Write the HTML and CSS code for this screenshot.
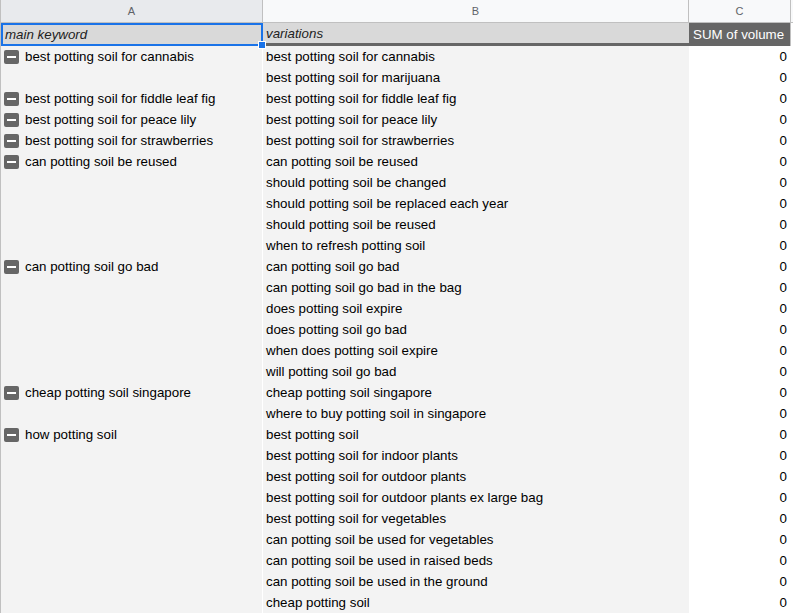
FILE: index.html
```html
<!DOCTYPE html>
<html>
<head>
<meta charset="utf-8">
<link rel="stylesheet" href="styles.css">
</head>
<body>
<div class="sheet">
  <div class="colheads">
    <div class="gut"></div>
    <div class="ch ch-a">A</div>
    <div class="ch ch-b">B</div>
    <div class="ch ch-c">C</div>
    <div class="ch ch-rest"></div>
  </div>
  <div class="row row-head">
    <div class="gut"></div>
    <div class="cell a h1">main keyword<span class="handle"></span></div>
    <div class="cell b h1">variations</div>
    <div class="cell c sum">SUM of volume</div>
    <div class="rest"></div>
  </div>
  <div class="row"><div class="gut"></div><div class="cell a"><span class="minus"></span>best potting soil for cannabis</div><div class="cell b">best potting soil for cannabis</div><div class="cell c num">0</div><div class="rest"></div></div>
  <div class="row"><div class="gut"></div><div class="cell a"></div><div class="cell b">best potting soil for marijuana</div><div class="cell c num">0</div><div class="rest"></div></div>
  <div class="row"><div class="gut"></div><div class="cell a"><span class="minus"></span>best potting soil for fiddle leaf fig</div><div class="cell b">best potting soil for fiddle leaf fig</div><div class="cell c num">0</div><div class="rest"></div></div>
  <div class="row"><div class="gut"></div><div class="cell a"><span class="minus"></span>best potting soil for peace lily</div><div class="cell b">best potting soil for peace lily</div><div class="cell c num">0</div><div class="rest"></div></div>
  <div class="row"><div class="gut"></div><div class="cell a"><span class="minus"></span>best potting soil for strawberries</div><div class="cell b">best potting soil for strawberries</div><div class="cell c num">0</div><div class="rest"></div></div>
  <div class="row"><div class="gut"></div><div class="cell a"><span class="minus"></span>can potting soil be reused</div><div class="cell b">can potting soil be reused</div><div class="cell c num">0</div><div class="rest"></div></div>
  <div class="row"><div class="gut"></div><div class="cell a"></div><div class="cell b">should potting soil be changed</div><div class="cell c num">0</div><div class="rest"></div></div>
  <div class="row"><div class="gut"></div><div class="cell a"></div><div class="cell b">should potting soil be replaced each year</div><div class="cell c num">0</div><div class="rest"></div></div>
  <div class="row"><div class="gut"></div><div class="cell a"></div><div class="cell b">should potting soil be reused</div><div class="cell c num">0</div><div class="rest"></div></div>
  <div class="row"><div class="gut"></div><div class="cell a"></div><div class="cell b">when to refresh potting soil</div><div class="cell c num">0</div><div class="rest"></div></div>
  <div class="row"><div class="gut"></div><div class="cell a"><span class="minus"></span>can potting soil go bad</div><div class="cell b">can potting soil go bad</div><div class="cell c num">0</div><div class="rest"></div></div>
  <div class="row"><div class="gut"></div><div class="cell a"></div><div class="cell b">can potting soil go bad in the bag</div><div class="cell c num">0</div><div class="rest"></div></div>
  <div class="row"><div class="gut"></div><div class="cell a"></div><div class="cell b">does potting soil expire</div><div class="cell c num">0</div><div class="rest"></div></div>
  <div class="row"><div class="gut"></div><div class="cell a"></div><div class="cell b">does potting soil go bad</div><div class="cell c num">0</div><div class="rest"></div></div>
  <div class="row"><div class="gut"></div><div class="cell a"></div><div class="cell b">when does potting soil expire</div><div class="cell c num">0</div><div class="rest"></div></div>
  <div class="row"><div class="gut"></div><div class="cell a"></div><div class="cell b">will potting soil go bad</div><div class="cell c num">0</div><div class="rest"></div></div>
  <div class="row"><div class="gut"></div><div class="cell a"><span class="minus"></span>cheap potting soil singapore</div><div class="cell b">cheap potting soil singapore</div><div class="cell c num">0</div><div class="rest"></div></div>
  <div class="row"><div class="gut"></div><div class="cell a"></div><div class="cell b">where to buy potting soil in singapore</div><div class="cell c num">0</div><div class="rest"></div></div>
  <div class="row"><div class="gut"></div><div class="cell a"><span class="minus"></span>how potting soil</div><div class="cell b">best potting soil</div><div class="cell c num">0</div><div class="rest"></div></div>
  <div class="row"><div class="gut"></div><div class="cell a"></div><div class="cell b">best potting soil for indoor plants</div><div class="cell c num">0</div><div class="rest"></div></div>
  <div class="row"><div class="gut"></div><div class="cell a"></div><div class="cell b">best potting soil for outdoor plants</div><div class="cell c num">0</div><div class="rest"></div></div>
  <div class="row"><div class="gut"></div><div class="cell a"></div><div class="cell b">best potting soil for outdoor plants ex large bag</div><div class="cell c num">0</div><div class="rest"></div></div>
  <div class="row"><div class="gut"></div><div class="cell a"></div><div class="cell b">best potting soil for vegetables</div><div class="cell c num">0</div><div class="rest"></div></div>
  <div class="row"><div class="gut"></div><div class="cell a"></div><div class="cell b">can potting soil be used for vegetables</div><div class="cell c num">0</div><div class="rest"></div></div>
  <div class="row"><div class="gut"></div><div class="cell a"></div><div class="cell b">can potting soil be used in raised beds</div><div class="cell c num">0</div><div class="rest"></div></div>
  <div class="row"><div class="gut"></div><div class="cell a"></div><div class="cell b">can potting soil be used in the ground</div><div class="cell c num">0</div><div class="rest"></div></div>
  <div class="row"><div class="gut"></div><div class="cell a"></div><div class="cell b">cheap potting soil</div><div class="cell c num">0</div><div class="rest"></div></div>
</div>
</body>
</html>
```

FILE: styles.css
```css
html, body {
  margin: 0;
  padding: 0;
  background: #ffffff;
  overflow: hidden;
}

.sheet {
  width: 793px;
  height: 614px;
  overflow: hidden;
  font-family: "Liberation Sans", Arial, sans-serif;
  font-size: 10pt;
  color: #000;
}

.colheads {
  display: flex;
  height: 23px;
  box-sizing: border-box;
  border-bottom: 1px solid #c0c0c0;
  background: #f8f9fa;
}

.ch {
  box-sizing: border-box;
  border-right: 1px solid #c0c0c0;
  display: flex;
  align-items: center;
  justify-content: center;
  font-size: 11px;
  color: #5f6368;
  flex: none;
}

.gut {
  width: 1px;
  flex: none;
  background: #c0c0c0;
}

.ch-a { width: 262px; background: #e8eaed; }
.ch-b { width: 426px; }
.ch-c { width: 102px; }
.ch-rest { flex: 1; border-right: none; }

.row {
  display: flex;
  height: 21px;
}

.row-head {
  height: 23px;
}

.cell {
  box-sizing: border-box;
  flex: none;
  display: flex;
  align-items: center;
  white-space: nowrap;
  overflow: hidden;
  line-height: 21px;
}

.a {
  width: 262px;
  background: #f3f3f3;
  border-right: 1px solid #ffffff;
  padding-left: 3px;
}

.b {
  width: 426px;
  background: #f3f3f3;
  padding-left: 3px;
}

.c {
  width: 102px;
  background: #ffffff;
  border-right: 1px solid #ffffff;
}

.rest {
  flex: 1;
  background: #ffffff;
}

.h1 {
  background: #d9d9d9;
  font-style: italic;
  color: #222;
}

.a.h1 {
  position: relative;
  overflow: visible;
  border: 2px solid #1a73e8;
  padding-left: 2px;
  z-index: 2;
}

.b.h1 {
  border-bottom: 3px solid #666666;
  padding-top: 1px;
}

.handle {
  position: absolute;
  right: -5px;
  bottom: -5px;
  width: 6px;
  height: 6px;
  background: #1a73e8;
  border: 1px solid #ffffff;
}

.sum {
  background: #666666;
  color: #ffffff;
  padding-left: 4px;
  border-right: 1px solid #c0c0c0;
}

.num {
  justify-content: flex-end;
  padding-right: 3px;
}

.minus {
  position: relative;
  flex: none;
  width: 15px;
  height: 14px;
  border-radius: 2px;
  background: #666666;
  margin-right: 6px;
}

.minus::after {
  content: "";
  position: absolute;
  left: 3px;
  right: 3px;
  top: 6px;
  height: 2px;
  background: #ffffff;
}
```
